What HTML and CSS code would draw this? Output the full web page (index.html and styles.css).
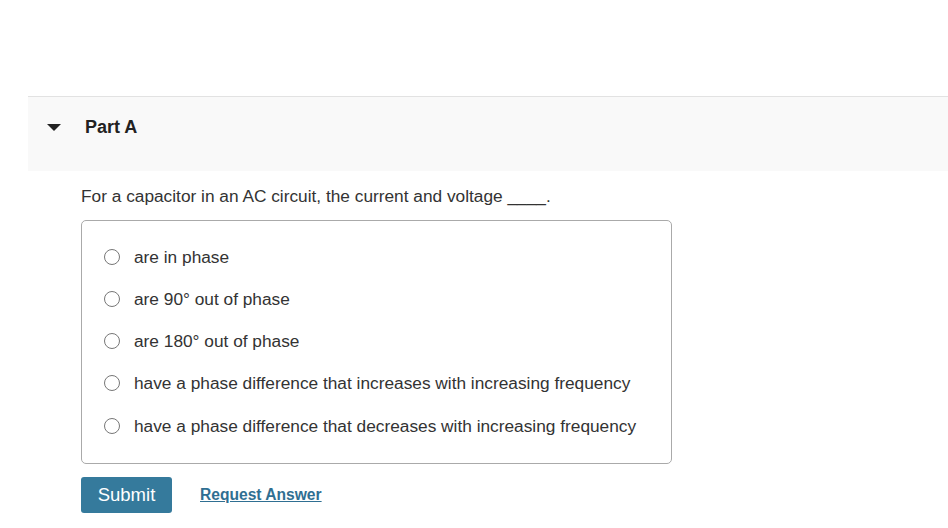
FILE: index.html
```html
<!DOCTYPE html>
<html lang="en">
<head>
    <meta charset="UTF-8">
    <title>Part A</title>
    <link rel="stylesheet" href="styles.css">
</head>
<body>
    <div class="part">
        <div class="part-header">
            <span class="caret"></span>
            <h2 class="part-title">Part A</h2>
        </div>
        <div class="part-body">
            <p class="question">For a capacitor in an AC circuit, the current and voltage ____.</p>
            <div class="choices">
                <label class="choice"><span class="radio"></span>are in phase</label>
                <label class="choice"><span class="radio"></span>are 90° out of phase</label>
                <label class="choice"><span class="radio"></span>are 180° out of phase</label>
                <label class="choice"><span class="radio"></span>have a phase difference that increases with increasing frequency</label>
                <label class="choice"><span class="radio"></span>have a phase difference that decreases with increasing frequency</label>
            </div>
            <div class="actions">
                <button class="submit-button">Submit</button>
                <a class="request-link" href="#">Request Answer</a>
            </div>
        </div>
    </div>
</body>
</html>
```

FILE: styles.css
```css
body {
    margin: 0;
    padding-top: 96px;
    background-color: #fff;
    font-family: "Liberation Sans", Arial, sans-serif;
    color: #333;
}

.part {
    margin-left: 28px;
}

.part-header {
    display: flex;
    align-items: center;
    height: 75px;
    padding-bottom: 14px;
    background-color: #f9f9f9;
    border-top: 1px solid #e2e2e2;
    box-sizing: border-box;
}

.caret {
    width: 0;
    height: 0;
    margin-left: 19px;
    border-left: 7px solid transparent;
    border-right: 7px solid transparent;
    border-top: 7px solid #222;
}

.part-title {
    margin: 0 0 0 24px;
    font-size: 18px;
    font-weight: bold;
    color: #222;
}

.part-body {
    padding-left: 53px;
}

.question {
    margin: 15px 0 0;
    font-size: 17.3px;
    line-height: 20px;
}

.choices {
    width: 591px;
    margin-top: 14px;
    padding: 15px 0 16px;
    border: 1px solid #aaa;
    border-radius: 5px;
    box-sizing: border-box;
}

.choice {
    display: flex;
    align-items: center;
    height: 42px;
    padding-left: 22px;
    font-size: 17.3px;
}

.choice:last-child {
    padding-top: 1px;
}

.radio {
    width: 16px;
    height: 16px;
    margin-right: 14px;
    border: 1.5px solid #777;
    border-radius: 50%;
    box-sizing: border-box;
}

.actions {
    display: flex;
    align-items: center;
    margin-top: 13px;
}

.submit-button {
    width: 91px;
    height: 36px;
    border: none;
    border-radius: 3px;
    background-color: #357a9c;
    color: #fff;
    font-family: "Liberation Sans", Arial, sans-serif;
    font-size: 18.5px;
}

.request-link {
    margin-left: 28px;
    font-size: 15.6px;
    font-weight: bold;
    color: #2f6f92;
}
```
